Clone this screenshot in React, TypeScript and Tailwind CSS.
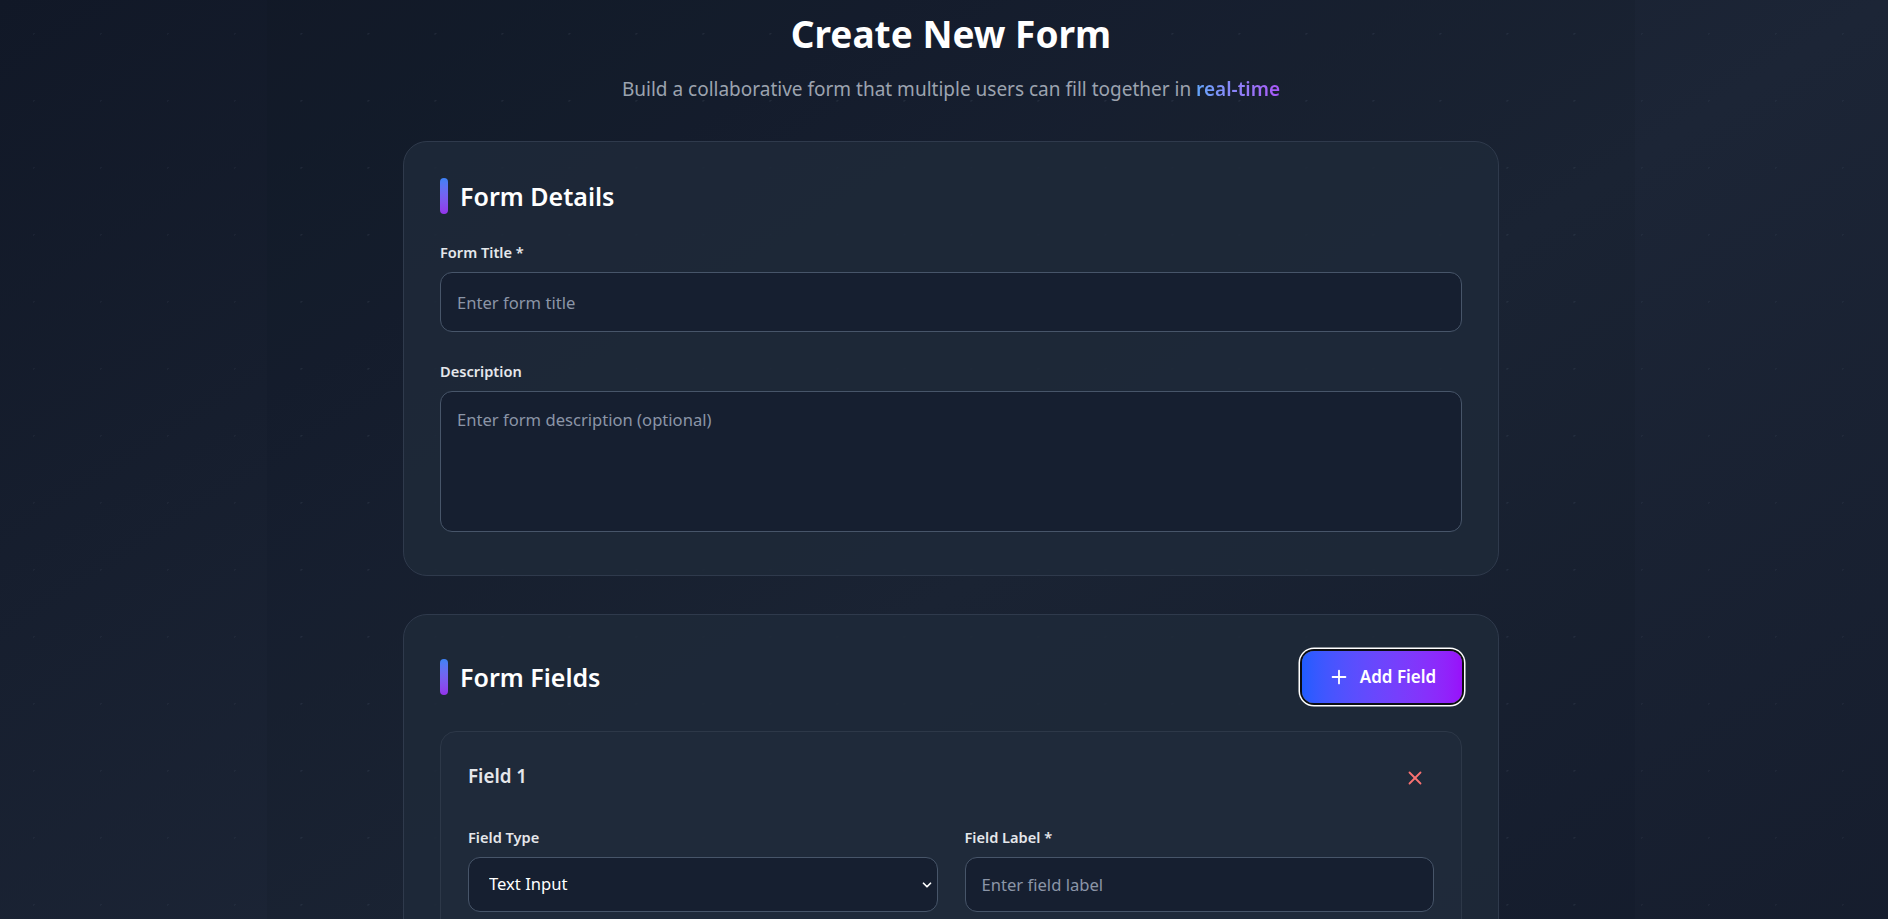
import { ChevronDown, Plus, X } from 'lucide-react';

const inputBase =
  'block w-full rounded-xl border border-[#475569] bg-[#161f30] px-4 text-[16.6px] text-white placeholder:text-[#8b95a7] outline-none';

function SectionTitle({ title }: { title: string }) {
  return (
    <div className="flex items-center gap-3">
      <span className="h-9 w-2 rounded-full bg-linear-to-b from-[#3b82f6] to-[#9333ea]" />
      <h2 className="text-[25px] leading-8 font-semibold text-white">{title}</h2>
    </div>
  );
}

function Label({ children }: { children: React.ReactNode }) {
  return <label className="mb-2.5 block text-[14.6px] leading-5 font-semibold text-[#e5e7eb]">{children}</label>;
}

export default function App() {
  return (
    <div className="min-h-screen bg-linear-to-br from-[#111827] via-[#1c2536] to-[#141b2b] font-['Segoe_UI','Noto_Sans',sans-serif]">
      <div className="min-h-screen bg-[radial-gradient(rgba(148,163,184,0.06)_1px,transparent_1px)] bg-size-[67px_67px] pl-[14px]">
        <div className="mx-auto min-h-screen w-[1368px] bg-[#0a101d]/10 bg-[radial-gradient(rgba(148,163,184,0.05)_1px,transparent_1px)] bg-size-[67px_67px]">
          <div className="mx-auto w-[1096px] pt-[14px] pb-16">
            <div className="mb-[38px] text-center">
              <h1 className="text-[37px] leading-10 font-bold text-white">Create New Form</h1>
              <p className="mt-[21px] text-[19px] leading-7 text-[#9ca3af]">
                Build a collaborative form that multiple users can fill together in{' '}
                <span className="bg-linear-to-r from-[#60a5fa] to-[#a855f7] bg-clip-text font-semibold text-transparent">
                  real-time
                </span>
              </p>
            </div>

            <div className="flex flex-col gap-[38px]">
              <section className="rounded-3xl border border-[#2f3a4c] bg-[#1e2939]/90 px-9 pt-9 pb-[43px]">
                <div className="mb-7">
                  <SectionTitle title="Form Details" />
                </div>
                <div className="mb-[29px]">
                  <Label>Form Title *</Label>
                  <input className={`${inputBase} h-[60px]`} placeholder="Enter form title" />
                </div>
                <div>
                  <Label>Description</Label>
                  <textarea
                    className={`${inputBase} h-[141px] resize-none py-4 leading-6`}
                    placeholder="Enter form description (optional)"
                  />
                </div>
              </section>

              <section className="rounded-3xl border border-[#2f3a4c] bg-[#1e2939]/90 p-9">
                <div className="mb-[28px] flex items-center justify-between">
                  <SectionTitle title="Form Fields" />
                  <button className="flex h-[52px] w-[160px] items-center justify-center gap-2.5 rounded-xl bg-linear-to-r from-[#1f5cff] to-[#9810fa] text-[17px] font-semibold text-white shadow-[0_0_0_2px_#0b0d12,0_0_0_3.5px_#ffffff]">
                    <Plus size={22} strokeWidth={2} />
                    Add Field
                  </button>
                </div>

                <div className="rounded-2xl border border-[#2d3848] bg-[#202b3b]/80 p-[27px]">
                  <div className="mb-[30px] flex items-start justify-between">
                    <h3 className="mt-[3px] text-[18.8px] leading-7 font-semibold text-[#e5e7eb]">Field 1</h3>
                    <button className="rounded-lg p-2 text-[#f87171]">
                      <X size={22} strokeWidth={2} />
                    </button>
                  </div>

                  <div className="grid grid-cols-2 gap-[27px]">
                    <div>
                      <Label>Field Type</Label>
                      <div className="relative">
                        <select className={`${inputBase} h-[55px] appearance-none px-5`} defaultValue="text">
                          <option value="text">Text Input</option>
                          <option value="textarea">Text Area</option>
                          <option value="number">Number</option>
                          <option value="email">Email</option>
                          <option value="select">Dropdown</option>
                        </select>
                        <ChevronDown
                          size={14}
                          strokeWidth={3}
                          className="pointer-events-none absolute top-1/2 right-[4px] -translate-y-1/2 text-white"
                        />
                      </div>
                    </div>
                    <div>
                      <Label>Field Label *</Label>
                      <input className={`${inputBase} h-[55px]`} placeholder="Enter field label" />
                    </div>
                  </div>

                  <div className="mt-6">
                    <Label>Placeholder</Label>
                    <input className={`${inputBase} h-[55px]`} placeholder="Enter placeholder text (optional)" />
                  </div>

                  <label className="mt-6 flex items-center gap-3 text-sm font-semibold text-[#e5e7eb]">
                    <input type="checkbox" className="h-4 w-4 accent-[#7c3aed]" />
                    Required field
                  </label>
                </div>
              </section>
            </div>
          </div>
        </div>
      </div>
    </div>
  );
}
